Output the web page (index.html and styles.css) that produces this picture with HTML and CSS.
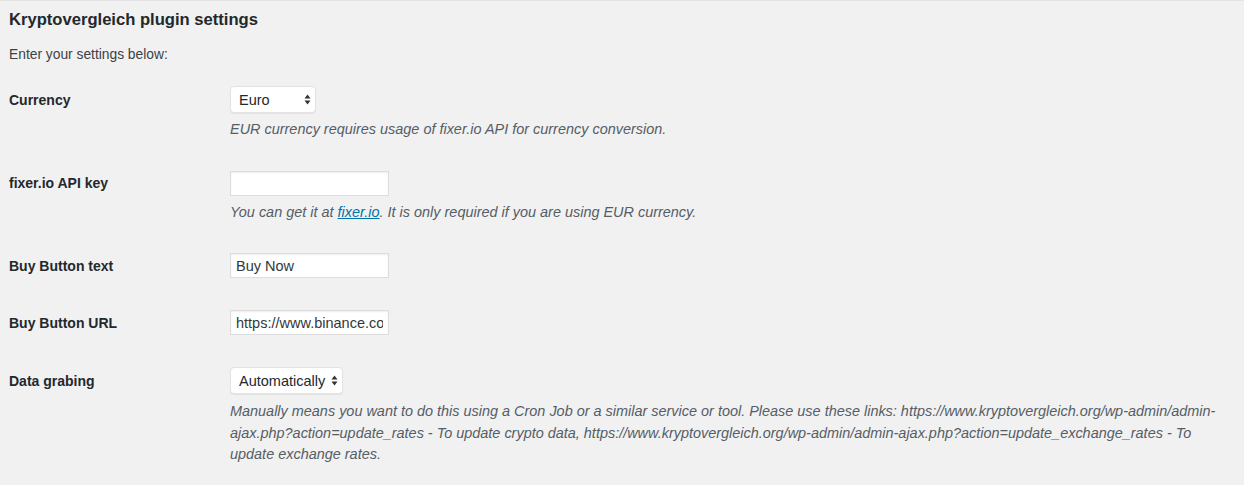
FILE: index.html
```html
<!DOCTYPE html>
<html>
<head>
<meta charset="utf-8">
<link rel="stylesheet" href="styles.css">
</head>
<body>
<div class="wrap">
  <h2 class="title">Kryptovergleich plugin settings</h2>
  <p class="intro">Enter your settings below:</p>
  <div class="form">
    <div class="row has-desc">
      <div class="label">Currency</div>
      <div class="control">
        <div class="select sel-euro"><span>Euro</span><svg class="arrows" width="7" height="11" viewBox="0 0 7 11"><path d="M3.5 0.5 L6.5 4.5 L0.5 4.5 Z M3.5 10.5 L6.5 6.5 L0.5 6.5 Z" fill="#333"/></svg></div>
      </div>
      <p class="desc">EUR currency requires usage of fixer.io API for currency conversion.</p>
    </div>
    <div class="row has-desc">
      <div class="label">fixer.io API key</div>
      <div class="control"><input class="input" type="text" value=""></div>
      <p class="desc">You can get it at <a href="#">fixer.io</a>. It is only required if you are using EUR currency.</p>
    </div>
    <div class="row">
      <div class="label">Buy Button text</div>
      <div class="control"><input class="input" type="text" value="Buy Now"></div>
    </div>
    <div class="row">
      <div class="label">Buy Button URL</div>
      <div class="control"><input class="input" type="text" value="https://www.binance.com"></div>
    </div>
    <div class="row has-desc">
      <div class="label">Data grabing</div>
      <div class="control">
        <div class="select sel-auto"><span>Automatically</span><svg class="arrows" width="7" height="11" viewBox="0 0 7 11"><path d="M3.5 0.5 L6.5 4.5 L0.5 4.5 Z M3.5 10.5 L6.5 6.5 L0.5 6.5 Z" fill="#333"/></svg></div>
      </div>
      <p class="desc long">Manually means you want to do this using a Cron Job or a similar service or tool. Please use these links: https://www.kryptovergleich.org/wp-admin/admin-ajax.php?action=update_rates - To update crypto data, https://www.kryptovergleich.org/wp-admin/admin-ajax.php?action=update_exchange_rates - To update exchange rates.</p>
    </div>
  </div>
</div>
</body>
</html>
```

FILE: styles.css
```css
html, body {
  margin: 0;
  padding: 0;
  background: #f1f1f1;
}
body {
  font-family: "Liberation Sans", Arial, sans-serif;
  color: #23282d;
  font-size: 14px;
}
.wrap {
  padding: 0 9px;
  height: 485px;
  border-top: 1px solid #e4e4e4;
  box-sizing: border-box;
}
.title {
  margin: 0;
  padding-top: 8px;
  font-size: 16.6px;
  line-height: 22px;
  font-weight: 600;
  color: #23282d;
}
.intro {
  margin: 14px 0 0;
  font-size: 13.8px;
  line-height: 20px;
  color: #3c4146;
}
.form {
  margin-top: 5px;
}
.row {
  display: grid;
  grid-template-columns: 221px 1fr;
  padding: 16px 0;
}
.row.has-desc {
  padding-bottom: 14.5px;
}
.label {
  grid-column: 1;
  grid-row: 1;
  align-self: center;
  font-weight: 600;
  font-size: 14px;
  color: #23282d;
}
.control {
  grid-column: 2;
  grid-row: 1;
  display: flex;
}
.desc {
  grid-column: 2;
  grid-row: 2;
  margin: 6px 0 0;
  font-style: italic;
  font-size: 14.45px;
  line-height: 21px;
  color: #555d66;
}
.desc a {
  color: #0073aa;
  text-decoration: underline;
}
.desc.long {
  margin-top: 7px;
  line-height: 21.5px;
}
.select {
  display: flex;
  align-items: center;
  justify-content: space-between;
  box-sizing: border-box;
  height: 27px;
  padding: 0 4px 0 8px;
  background: #fff;
  border: 1px solid #e2e2e2;
  border-radius: 4px;
  box-shadow: 0 1px 1px rgba(0,0,0,0.06);
  font-size: 14.5px;
  color: #23282d;
}
.sel-euro { width: 86px; }
.sel-auto { width: 113px; }
.arrows { flex: none; }
.input {
  box-sizing: border-box;
  width: 159px;
  height: 25px;
  margin: 0;
  padding: 0 5px;
  background: #fff;
  border: 1px solid #ddd;
  border-radius: 0;
  box-shadow: inset 0 1px 2px rgba(0,0,0,0.07);
  font-family: "Liberation Sans", Arial, sans-serif;
  font-size: 14.5px;
  color: #32373c;
  outline: none;
}
```
